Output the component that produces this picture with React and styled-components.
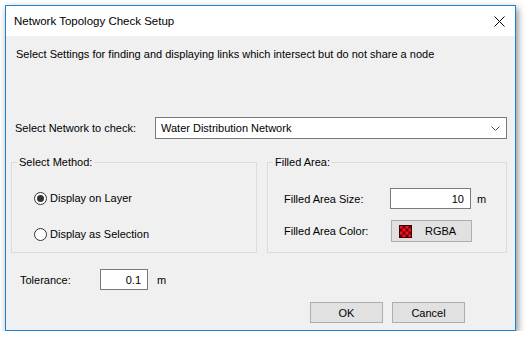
import React from "react";
import styled, { createGlobalStyle } from "styled-components";

const GlobalStyle = createGlobalStyle`
  html, body {
    margin: 0;
    padding: 0;
    background: #ffffff;
  }
  body {
    font-family: "Segoe UI", "Liberation Sans", sans-serif;
    font-size: 11px;
    line-height: 16px;
    color: #000;
  }
`;

const Page = styled.div`
  padding: 5px 0 0 5px;
`;

const Window = styled.div`
  width: 509px;
  height: 324px;
  border: 1px solid #1883d7;
  background: #f0f0f0;
  display: flex;
  flex-direction: column;
  box-shadow: 2px 3px 7px rgba(0, 0, 0, 0.45);
`;

const TitleBar = styled.div`
  height: 30px;
  background: #ffffff;
  display: flex;
  align-items: center;
  justify-content: space-between;
  padding: 0 10px 0 8px;
  flex-shrink: 0;
`;

const Title = styled.span`
  font-size: 11.5px;
`;

const Body = styled.div`
  display: flex;
  flex-direction: column;
  padding: 0 8px 0 5px;
`;

const Description = styled.p`
  margin: 10px 0 0 5px;
`;

const Row = styled.div`
  display: flex;
  align-items: center;
  margin-top: ${(p) => p.$top || 0}px;
  padding-left: ${(p) => p.$indent || 0}px;
`;

const Label = styled.span`
  width: ${(p) => p.$width}px;
  flex-shrink: 0;
`;

const Select = styled.div`
  flex: 1;
  height: 20px;
  border: 1px solid #7a7a7a;
  background: #fff;
  display: flex;
  align-items: center;
  justify-content: space-between;
  padding: 0 6px 0 5px;
`;

const Groups = styled.div`
  display: grid;
  grid-template-columns: 246px 240px;
  column-gap: 10px;
  margin-top: 15px;
`;

const Group = styled.fieldset`
  margin: 0;
  padding: 0;
  height: 97px;
  border: 1px solid #dcdcdc;
  display: flex;
  flex-direction: column;
  min-width: 0;
`;

const Legend = styled.legend`
  margin-left: 5px;
  padding: 0 2px;
`;

const RadioRow = styled.label`
  display: flex;
  align-items: center;
  gap: 3px;
  height: 16px;
  margin-top: ${(p) => p.$top}px;
  padding-left: 22px;
`;

const Radio = styled.span`
  width: 11px;
  height: 11px;
  border: 1px solid #333;
  border-radius: 50%;
  background: #fff;
  display: flex;
  align-items: center;
  justify-content: center;

  &::after {
    content: "";
    width: 7px;
    height: 7px;
    border-radius: 50%;
    background: ${(p) => (p.$checked ? "#333" : "transparent")};
  }
`;

const Field = styled.div`
  width: ${(p) => p.$width}px;
  height: 21px;
  border: 1px solid #7a7a7a;
  background: #fff;
  display: flex;
  align-items: center;
  justify-content: flex-end;
  padding-right: 6px;
  box-sizing: border-box;
  flex-shrink: 0;
`;

const Unit = styled.span`
  margin-left: ${(p) => p.$gap}px;
`;

const Button = styled.button`
  width: ${(p) => p.$width || 73}px;
  height: 21px;
  border: 1px solid #adadad;
  background: #e1e1e1;
  font: inherit;
  color: #000;
  padding: 0;
  display: flex;
  align-items: center;
  justify-content: center;
  gap: 13px;
`;

const ColorButton = styled(Button)`
  justify-content: flex-start;
  padding-left: 7px;
  height: 22px;
`;

const Footer = styled.div`
  display: flex;
  justify-content: flex-end;
  gap: 9px;
  margin-top: 12px;
  padding-right: 42px;
`;

const CloseIcon = () => (
  <svg width="11" height="11" viewBox="0 0 11 11">
    <path d="M0.5 0.5 L10.5 10.5 M10.5 0.5 L0.5 10.5" stroke="#000" strokeWidth="1" />
  </svg>
);

const Chevron = () => (
  <svg width="9" height="5" viewBox="0 0 9 5">
    <path d="M0.5 0.5 L4.5 4.5 L8.5 0.5" stroke="#555" strokeWidth="1" fill="none" />
  </svg>
);

const Checker = () => (
  <svg width="13" height="13" viewBox="0 0 13 13">
    <rect x="0" y="0" width="13" height="13" fill="#7a0000" />
    {[0, 1, 2, 3].map((r) =>
      [0, 1, 2, 3].map((c) =>
        (r + c) % 2 === 0 ? (
          <rect key={`${r}-${c}`} x={0.5 + c * 3} y={0.5 + r * 3} width="3" height="3" fill="#e8182a" />
        ) : null
      )
    )}
    <rect x="0.5" y="0.5" width="12" height="12" fill="none" stroke="#3a0000" />
  </svg>
);

export default function App() {
  return (
    <Page>
      <GlobalStyle />
      <Window>
        <TitleBar>
          <Title>Network Topology Check Setup</Title>
          <CloseIcon />
        </TitleBar>
        <Body>
          <Description>
            Select Settings for finding and displaying links which intersect but do not share a node
          </Description>

          <Row $top={55} $indent={4}>
            <Label $width={140}>Select Network to check:</Label>
            <Select>
              <span>Water Distribution Network</span>
              <Chevron />
            </Select>
          </Row>

          <Groups>
            <Group>
              <Legend>Select Method:</Legend>
              <RadioRow $top={20}>
                <Radio $checked />
                Display on Layer
              </RadioRow>
              <RadioRow $top={20}>
                <Radio />
                Display as Selection
              </RadioRow>
            </Group>
            <Group>
              <Legend>Filled Area:</Legend>
              <Row $top={18} $indent={16}>
                <Label $width={106}>Filled Area Size:</Label>
                <Field $width={81}>10</Field>
                <Unit $gap={6}>m</Unit>
              </Row>
              <Row $top={11} $indent={16}>
                <Label $width={107}>Filled Area Color:</Label>
                <ColorButton $width={81}>
                  <Checker />
                  RGBA
                </ColorButton>
              </Row>
            </Group>
          </Groups>

          <Row $top={16} $indent={9}>
            <Label $width={80}>Tolerance:</Label>
            <Field $width={48}>0.1</Field>
            <Unit $gap={9}>m</Unit>
          </Row>

          <Footer>
            <Button>OK</Button>
            <Button>Cancel</Button>
          </Footer>
        </Body>
      </Window>
    </Page>
  );
}
